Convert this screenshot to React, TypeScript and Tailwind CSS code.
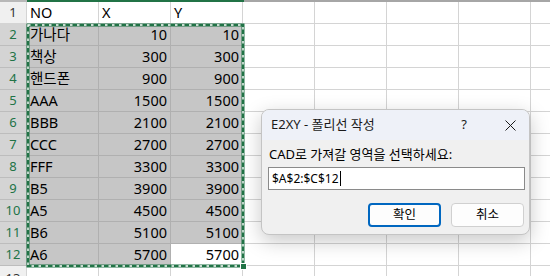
import React from "react";

const rows: [string, string, string][] = [
  ["가나다", "10", "10"],
  ["책상", "300", "300"],
  ["핸드폰", "900", "900"],
  ["AAA", "1500", "1500"],
  ["BBB", "2100", "2100"],
  ["CCC", "2700", "2700"],
  ["FFF", "3300", "3300"],
  ["B5", "3900", "3900"],
  ["A5", "4500", "4500"],
  ["B6", "5100", "5100"],
  ["A6", "5700", "5700"],
];

const font = { fontFamily: '"Noto Sans", "Noto Sans CJK KR", sans-serif' };

function Empty({ n }: { n: number }) {
  return (
    <>
      {Array.from({ length: n }).map((_, i) => (
        <div key={i} className="w-[72px] shrink-0 border-r border-b border-[#d4d4d4]" />
      ))}
    </>
  );
}

export default function App() {
  return (
    <div className="relative w-[550px] h-[276px] overflow-hidden bg-white text-black" style={font}>
      <div className="flex h-[2px]">
        <div className="w-[27px] bg-[#b8b8b8]" />
        <div className="w-[217px] bg-[#217346]" />
        <div className="flex-1 bg-[#a6a6a6]" />
      </div>
      {/* row 1 */}
      <div className="flex h-[22px]">
        <div className="w-[27px] shrink-0 border-r border-b border-[#d4d4d4] bg-[#f0f0f0] flex items-center justify-center text-[13px] text-[#333]">1</div>
        <div className="w-[72px] shrink-0 border-r border-b border-[#d4d4d4] pl-[3px] text-[14.5px] leading-[21px]">NO</div>
        <div className="w-[72px] shrink-0 border-r border-b border-[#d4d4d4] pl-[3px] text-[14.5px] leading-[21px]">X</div>
        <div className="w-[72px] shrink-0 border-r border-b border-[#d4d4d4] pl-[3px] text-[14.5px] leading-[21px]">Y</div>
        <Empty n={5} />
      </div>
      {rows.map((r, i) => {
        const last = i === rows.length - 1;
        return (
          <div key={i} className="flex h-[22px]">
            <div className="w-[27px] shrink-0 border-r border-b border-[#bdbdbd] bg-[#d4d4d4] flex items-center justify-center text-[13px] text-[#217346]">
              {i + 2}
            </div>
            <div className="w-[72px] shrink-0 border-r border-b border-[#b0b0b0] bg-[#c6c6c6] pl-[3px] text-[14.5px] leading-[21px]">{r[0]}</div>
            <div className="w-[72px] shrink-0 border-r border-b border-[#b0b0b0] bg-[#c6c6c6] pr-[3px] text-right text-[14.5px] leading-[21px]">{r[1]}</div>
            <div className={`w-[72px] shrink-0 border-r border-b border-[#b0b0b0] pr-[3px] text-right text-[14.5px] leading-[21px] ${last ? "bg-white" : "bg-[#c6c6c6]"}`}>{r[2]}</div>
            <Empty n={5} />
          </div>
        );
      })}
      <div className="flex h-[22px]">
        <div className="w-[27px] shrink-0 border-r border-b border-[#d4d4d4] bg-[#f0f0f0] flex items-start justify-center pt-[3px] text-[13px] text-[#333]">13</div>
        <Empty n={8} />
      </div>

      {/* marching ants selection */}
      <svg className="absolute left-0 top-0" width="550" height="276">
        <rect x="28" y="25" width="215" height="241" fill="none" stroke="#217346" strokeWidth="3" />
        <rect x="28" y="25" width="215" height="241" fill="none" stroke="#ffffff" strokeWidth="1.4" strokeDasharray="2.5 4.5" />
        <rect x="240" y="263" width="7" height="7" fill="#ffffff" />
        <rect x="241" y="264" width="5" height="5" fill="#217346" />
      </svg>

      {/* dialog */}
      <div className="absolute left-[261px] top-[109px] w-[269px] h-[126px] rounded-[8px] border border-[#c4c4c4] bg-[#f0f0f0] overflow-hidden shadow-[0_6px_20px_rgba(0,0,0,0.22)]">
        <div className="h-[30px] bg-[#eef1f8] flex items-center pl-[9px] text-[13px] text-[#1a1a1a]">
          <span>E2XY - 폴리선 작성</span>
          <span className="ml-auto mr-[38px] text-[13px]">?</span>
          <svg width="11" height="11" viewBox="0 0 11 11" className="mr-[13px]">
            <path d="M0.5 0.5 L10.5 10.5 M10.5 0.5 L0.5 10.5" stroke="#1a1a1a" strokeWidth="1" />
          </svg>
        </div>
        <div className="pl-[6px] pt-[6px]">
          <div className="pl-[1px] text-[13px] leading-[16px] text-black">CAD로 가져갈 영역을 선택하세요:</div>
          <div className="mt-[5px] w-[257px] h-[23px] border border-[#8a8a8a] bg-white flex items-center pl-[3px] text-[12px]">
            <span>$A$2:$C$12</span>
            <span className="ml-[1px] w-[1px] h-[15px] bg-black" />
          </div>
          <div className="mt-[13px] flex gap-[10px] pl-[100px]">
            <div className="w-[73px] h-[24px] rounded-[4px] border-2 border-[#0067c0] bg-[#fdfdfd] flex items-center justify-center text-[12.5px]">확인</div>
            <div className="w-[73px] h-[24px] rounded-[4px] border border-[#d0d0d0] bg-[#fdfdfd] flex items-center justify-center text-[12.5px]">취소</div>
          </div>
        </div>
      </div>
    </div>
  );
}
